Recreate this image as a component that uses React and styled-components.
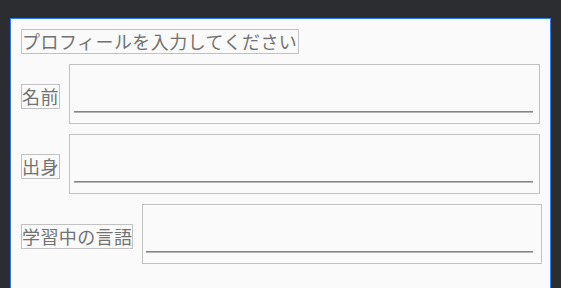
import React from 'react';
import styled, { createGlobalStyle } from 'styled-components';

const GlobalStyle = createGlobalStyle`
  html, body {
    margin: 0;
    padding: 0;
    background: #2b2d31;
    overflow: hidden;
  }
  body {
    font-family: "Noto Sans CJK JP", "Noto Sans", sans-serif;
  }
`;

const Screen = styled.div`
  height: 288px;
  padding: 18px 10px 0 10px;
  box-sizing: border-box;
`;

const Panel = styled.div`
  background: #fafafa;
  border: 1px solid #2f80e4;
  border-bottom: none;
  height: 280px;
  box-sizing: border-box;
  padding: 10px 8px 0 10px;
  display: flex;
  flex-direction: column;
  align-items: flex-start;
`;

const Title = styled.div`
  border: 1px solid #c2c2c2;
  color: #727272;
  font-size: 18px;
  line-height: 23px;
  padding: 0 1px 0 0;
  letter-spacing: 0.45px;
`;

const Rows = styled.div`
  align-self: stretch;
  display: flex;
  flex-direction: column;
  gap: 10px;
  margin-top: 10px;
`;

const Row = styled.div`
  display: flex;
  align-items: center;
  gap: 9px;
  padding-right: ${p => (p.$wide ? '0' : '2px')};
`;

const Label = styled.div`
  border: 1px solid #c2c2c2;
  color: #727272;
  font-size: 18px;
  line-height: 23px;
  letter-spacing: 0.4px;
  flex-shrink: 0;
  margin-top: 4px;
`;

const FieldBox = styled.div`
  flex: 1;
  height: 60px;
  box-sizing: border-box;
  border: 1px solid #c2c2c2;
  padding: 46px ${p => (p.$wide ? '8px' : '6px')} 0 ${p => (p.$wide ? '3px' : '4px')};
`;

const Underline = styled.div`
  height: 1px;
  background: #858585;
  border-bottom: 1px solid #b4b4b4;
`;

const fields = [
  { label: '名前' },
  { label: '出身' },
  { label: '学習中の言語', wide: true },
];

export default function App() {
  return (
    <>
      <GlobalStyle />
      <Screen>
        <Panel>
          <Title>プロフィールを入力してください</Title>
          <Rows>
            {fields.map(f => (
              <Row key={f.label} $wide={f.wide}>
                <Label>{f.label}</Label>
                <FieldBox $wide={f.wide}>
                  <Underline />
                </FieldBox>
              </Row>
            ))}
          </Rows>
        </Panel>
      </Screen>
    </>
  );
}
